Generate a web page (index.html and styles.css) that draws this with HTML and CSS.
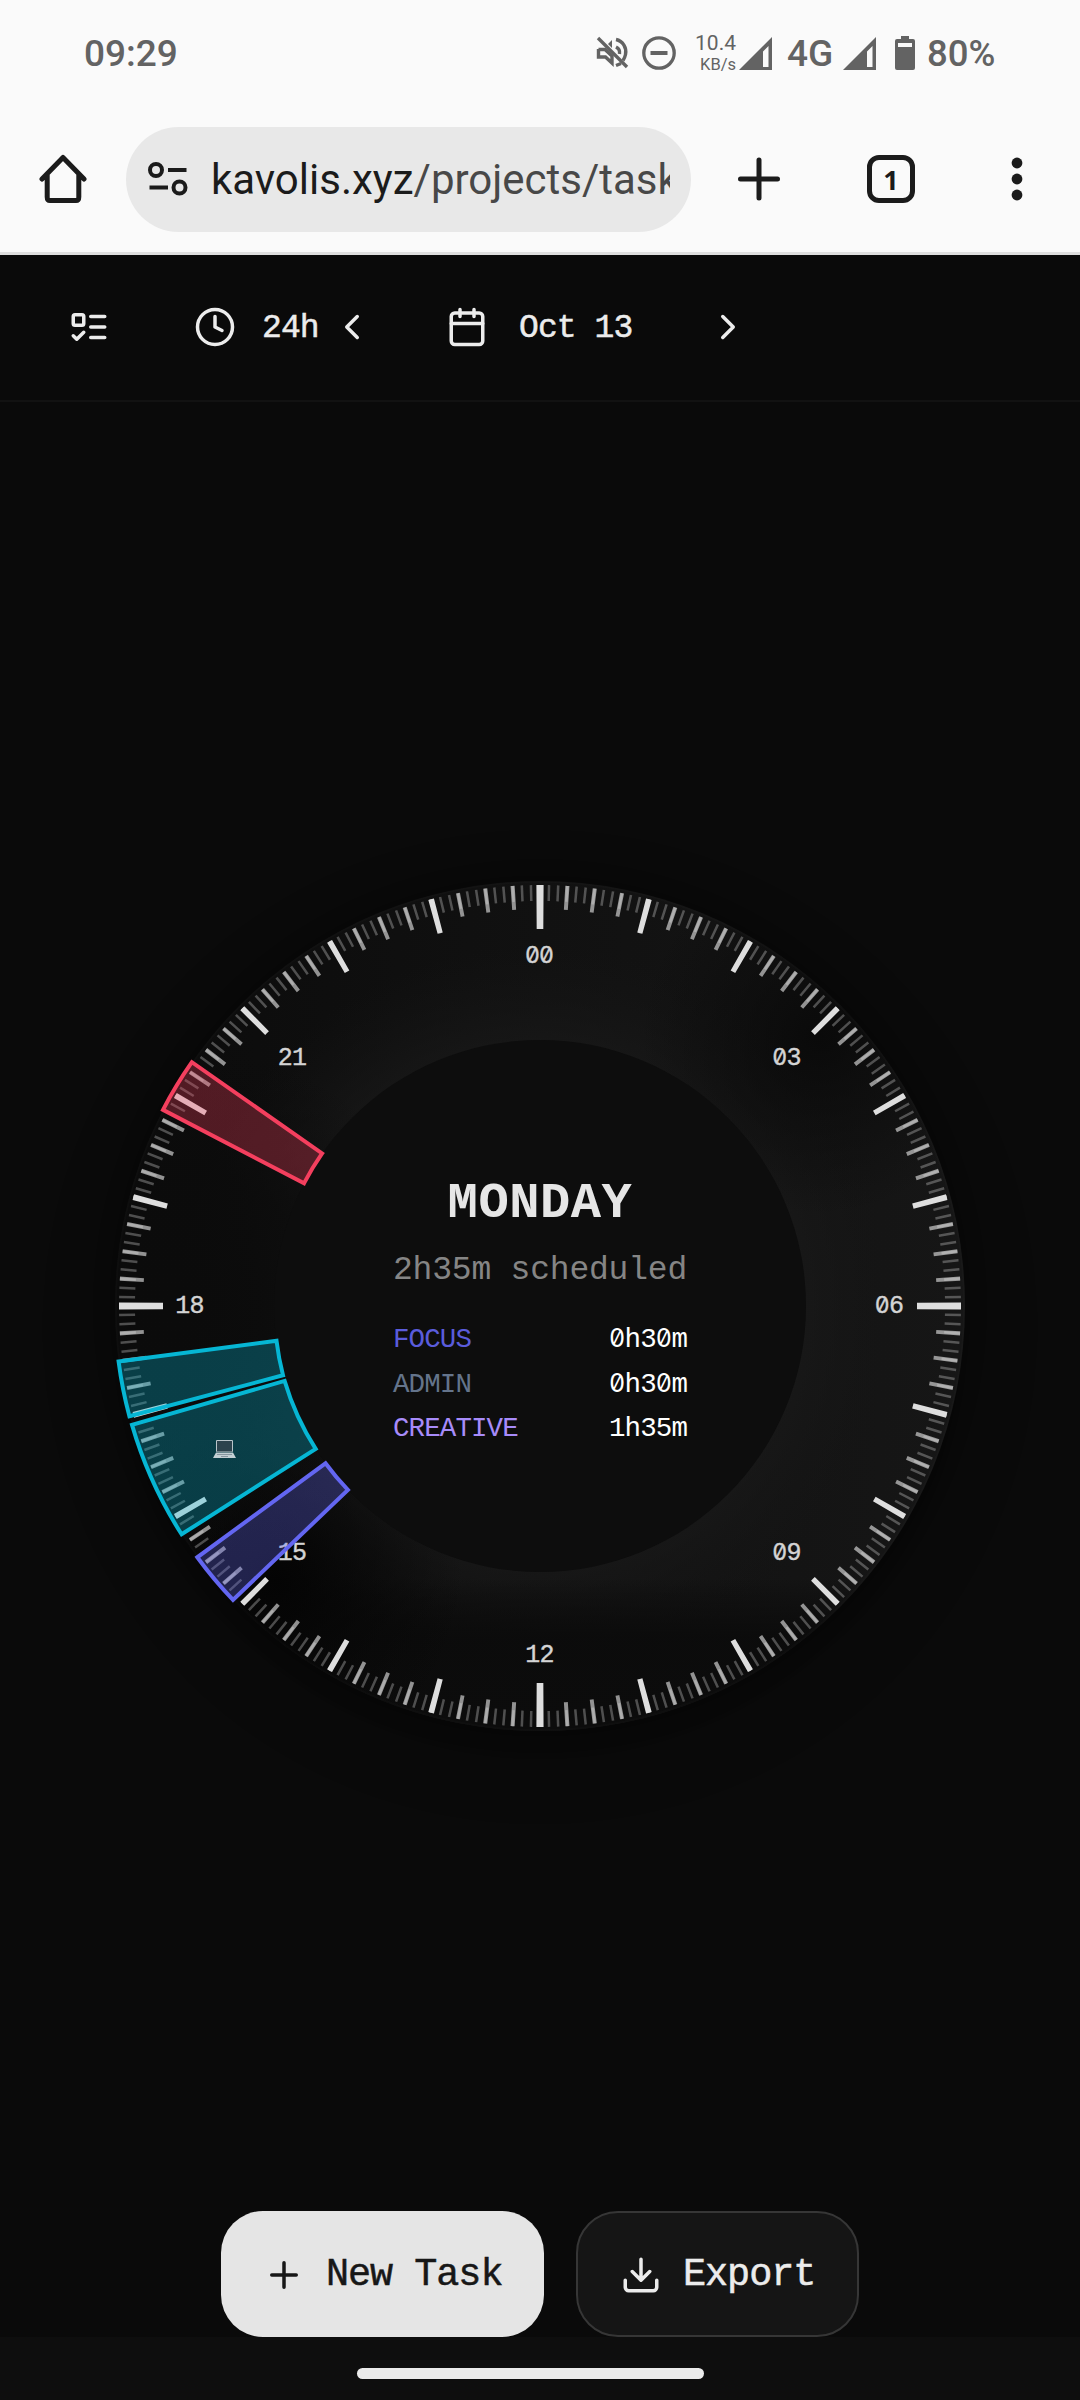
FILE: index.html
```html
<!DOCTYPE html>
<html lang="en">
<head>
<meta charset="utf-8">
<title>Task Clock</title>
<link rel="stylesheet" href="styles.css">
</head>
<body>
<div class="screen">
  <header class="status">
    <span class="time">09:29</span>
    <svg class="mute" width="34" height="34" viewBox="0 0 34 34" fill="none" stroke="#636363" stroke-width="3.4"><path d="M2 2 31 31"/><path d="M2.5 13.500H9L16 20M2.500 13V21H9.500L16 27V19"/><path d="M12 8 16 4V12Z" fill="#636363" stroke="none"/><path d="M20 3.500C27 5 31 12 29.500 18.500 29 21 28 23 27 24.500M20 11C23 12.500 24 15 23.500 18"/><path d="M20 29.500 25 27.500"/></svg>
    <svg class="dnd" width="34" height="34" viewBox="0 0 34 34" fill="none" stroke="#636363"><circle cx="17" cy="17" r="15.200" stroke-width="3.300"/><path d="M8.500 17H25.500" stroke-width="4"/></svg>
    <span class="speed"><b>10.4</b><small>KB/s</small></span>
    <svg class="sig1" width="33" height="33" viewBox="0 0 33 33"><path fill="#636363" fill-rule="evenodd" d="M33 0V33H0ZM29.500 9 24 14.500V30H29.500Z"/></svg>
    <span class="net">4G</span>
    <svg class="sig2" width="33" height="33" viewBox="0 0 33 33"><path fill="#636363" fill-rule="evenodd" d="M33 0V33H0ZM29.500 9 24 14.500V30H29.500Z"/></svg>
    <svg class="battery" width="20" height="34" viewBox="0 0 20 34"><path fill="#636363" fill-rule="evenodd" d="M6 0H14V3H18Q20 3 20 5V32Q20 34 18 34H2Q0 34 0 32V5Q0 3 2 3H6ZM3 7V11H17V7Z"/></svg>
    <span class="pct">80%</span>
  </header>
  <nav class="browser">
    <svg class="home" width="48" height="50" viewBox="0 0 48 50" fill="none" stroke="#1b1b1b" stroke-width="5" stroke-linejoin="round" stroke-linecap="round"><path d="M3 25 24 3.500 45 25M8.200 20V43Q8.200 46.500 11 46.500H37Q39.800 46.500 39.800 43V20"/></svg>
    <div class="pill">
      <svg width="40" height="34" viewBox="0 0 40 34" fill="none" stroke="#1b1b1b" stroke-width="4"><circle cx="8" cy="8" r="6"/><circle cx="31.500" cy="25.500" r="6"/><path d="M20 8H38.500M1.500 25.500H20"/></svg>
      <div class="url">kavolis.xyz<span>/projects/task</span></div>
    </div>
    <svg class="add" width="42" height="44" viewBox="0 0 42 44" stroke="#1b1b1b" stroke-width="5" stroke-linecap="round"><path d="M21 3V41M2.500 22H39.500"/></svg>
    <div class="tabs">1</div>
    <svg class="more" width="12" height="44" viewBox="0 0 12 44" fill="#1b1b1b"><circle cx="6" cy="6" r="5.400"/><circle cx="6" cy="22" r="5.400"/><circle cx="6" cy="38" r="5.400"/></svg>
  </nav>
  <div class="toolbar">
    <svg class="icon list" viewBox="0 0 24 24"><rect x="3" y="5" width="6" height="6" rx="1"/><path d="m3 17 2 2 4-4M13 6h8M13 12h8M13 18h8"/></svg>
    <svg class="icon clock" viewBox="0 0 24 24"><circle cx="12" cy="12" r="10"/><path d="M12 6v6l4 2"/></svg>
    <span class="mode">24h</span>
    <svg class="icon prev" viewBox="0 0 24 24"><path d="m15 18-6-6 6-6"/></svg>
    <svg class="icon cal" viewBox="0 0 24 24"><path d="M8 2v4M16 2v4M3 10h18"/><rect x="3" y="4" width="18" height="18" rx="2"/></svg>
    <span class="date">Oct 13</span>
    <svg class="icon next" viewBox="0 0 24 24"><path d="m9 18 6-6-6-6"/></svg>
  </div>
  <main>
    <div class="dial">
      <svg class="face" viewBox="-425 -425 850 850">
        <defs>
          <linearGradient id="side" x1="0" x2="1" y1="0" y2="0"><stop offset="0" stop-color="#0b0b0b"/><stop offset=".5" stop-color="#111"/><stop offset="1" stop-color="#161616"/></linearGradient>
          <linearGradient id="foot" x1="0" x2="0" y1="0" y2="1"><stop offset=".82" stop-color="#090909" stop-opacity="0"/><stop offset=".89" stop-color="#0b0b0b" stop-opacity=".95"/><stop offset="1" stop-color="#0c0c0c"/></linearGradient>
          <radialGradient id="glow" gradientUnits="userSpaceOnUse" cx="0" cy="0" r="425"><stop offset=".62" stop-color="#191919" stop-opacity=".7"/><stop offset=".85" stop-color="#151515" stop-opacity="0"/></radialGradient>
          <radialGradient id="shadeA" gradientUnits="userSpaceOnUse" cx="280" cy="-270" r="180"><stop offset="0" stop-color="#080808" stop-opacity=".85"/><stop offset="1" stop-color="#0a0a0a" stop-opacity="0"/></radialGradient>
          <radialGradient id="shadeB" gradientUnits="userSpaceOnUse" cx="-265" cy="275" r="190"><stop offset="0" stop-color="#030303" stop-opacity=".9"/><stop offset="1" stop-color="#060606" stop-opacity="0"/></radialGradient>
          <radialGradient id="shadeC" gradientUnits="userSpaceOnUse" cx="-350" cy="0" r="260"><stop offset="0" stop-color="#0b0b0b"/><stop offset=".5" stop-color="#0b0b0b" stop-opacity=".8"/><stop offset="1" stop-color="#0b0b0b" stop-opacity="0"/></radialGradient>
        </defs>
        <circle r="425" fill="url(#side)"/>
        <circle r="425" fill="url(#glow)"/>
        <circle r="425" fill="url(#foot)"/>
        <circle r="425" fill="url(#shadeA)"/>
        <circle r="425" fill="url(#shadeB)"/>
        <circle r="425" fill="url(#shadeC)"/>
        <circle r="424" fill="none" stroke="#fff" stroke-opacity=".015" stroke-width="2"/>
        <circle r="266" fill="#0d0d0d"/>
        <g class="ticks">
          <circle class="t5" r="413" pathLength="288"/>
          <circle class="t15" r="409" pathLength="96"/>
          <circle class="t60" r="403.500" pathLength="24"/>
          <circle class="t360" r="399" pathLength="4"/>
        </g>
        <g class="hours">
          <text x="-1" y="-343.500"><tspan class="z">00</tspan></text>
          <text x="246.500" y="-241.500"><tspan class="z">0</tspan>3</text>
          <text x="349" y="6.500"><tspan class="z">0</tspan>6</text>
          <text x="246.500" y="253.500"><tspan class="z">0</tspan>9</text>
          <text x="-.5" y="355.500">12</text>
          <text x="-248" y="253.500">15</text>
          <text x="-350.500" y="6.500">18</text>
          <text x="-248" y="-241.500">21</text>
        </g>
        <g class="slots">
          <path class="rose" d="M-348.100-243.800A425 425 0 0 0-377-196.200L-235.900-122.800A266 266 0 0 1-217.900-152.600Z"/>
          <path class="cyan" d="M-421.400 55.500A425 425 0 0 0-410.600 110.300L-257 69.300A266 266 0 0 1-263.500 34.800Z"/>
          <path class="cyan" d="M-408 118.900A425 425 0 0 0-358.400 228.300L-224.300 142.900A266 266 0 0 1-255.400 74.900Z"/>
          <path class="indigo" d="M-342.700 251.300A425 425 0 0 0-307 293.900L-192.100 183.900A266 266 0 0 1-214.500 157.300Z"/>
        </g>
        <g transform="translate(-327 134)">
          <rect x="3" y="0" width="17" height="12" rx="1" fill="#b8c4c9"/>
          <rect x="4" y="1" width="15" height="10.500" fill="#2c434d"/>
          <path d="M3 12.500H20L23 18H0Z" fill="#c3d0d4"/>
          <path d="M4 14.500H19M8 16.500H15" stroke="#8797a0" stroke-width="1"/>
        </g>
      </svg>
      <div class="summary">
        <h1>MONDAY</h1>
        <p>2h35m scheduled</p>
        <div class="row"><span class="focus">FOCUS</span><span><i>0</i>h3<i>0</i>m</span></div>
        <div class="row"><span class="admin">ADMIN</span><span><i>0</i>h3<i>0</i>m</span></div>
        <div class="row"><span class="creative">CREATIVE</span><span>1h35m</span></div>
      </div>
    </div>
    <div class="actions">
      <button class="primary"><svg class="icon" viewBox="0 0 24 24"><path d="M5 12h14M12 5v14"/></svg>New Task</button>
      <button class="ghost"><svg class="icon" viewBox="0 0 24 24"><path d="M21 15v4a2 2 0 0 1-2 2H5a2 2 0 0 1-2-2v-4M7 10l5 5 5-5M12 15V3"/></svg>Export</button>
    </div>
  </main>
  <footer class="gesture"><div></div></footer>
</div>
</body>
</html>
```
FILE: styles.css
```css
* { box-sizing: border-box; }
body { margin: 0; background: #0a0a0a; }
svg { display: block; flex: none; }
.screen { width: 1080px; height: 2400px; display: flex; flex-direction: column; overflow: hidden; font-family: "Liberation Mono", monospace; }

.status { height: 106px; background: #fafafa; color: #636363; display: flex; align-items: center; font: 500 37px/1 Roboto, sans-serif; padding-left: 84px; white-space: nowrap; }
.time { width: 512px; }
.mute { margin-right: 12px; }
.dnd { margin-right: 19px; }
.speed { width: 41px; display: flex; flex-direction: column; align-items: flex-end; margin-right: 3px; font-weight: 400; }
.speed b { font-size: 21px; line-height: 24px; font-weight: 400; }
.speed small { font-size: 16.5px; line-height: 20px; }
.net { width: 56px; margin-left: 15px; font-size: 37px; padding-top: 1px; }
.battery { margin: 0 12px 0 19px; }
.pct { font-size: 36.5px; padding-top: 2px; }

.browser { height: 149px; background: #fafafa; border-bottom: 3px solid #dedede; display: flex; align-items: center; padding-left: 39px; }
.home { margin: 0 39px 0 0; }
.pill { width: 565px; height: 105px; border-radius: 53px; background: #e8e8e8; display: flex; align-items: center; padding-left: 22px; }
.url { margin-left: 23px; width: 459px; overflow: hidden; white-space: nowrap; font: 400 42px/60px Roboto, sans-serif; color: #1b1b1b; padding-top: 1px; }
.url span { color: #484848; }
.add { margin-left: 47px; }
.tabs { margin-left: 87px; width: 48px; height: 48px; border: 5px solid #1b1b1b; border-radius: 12px; display: flex; align-items: center; justify-content: center; font: 700 27px/1 "Noto Sans", sans-serif; color: #1b1b1b; }
.more { margin-left: 96px; }

.icon { width: 42px; height: 42px; fill: none; stroke: currentColor; stroke-width: 2; stroke-linecap: round; stroke-linejoin: round; flex: none; }
.toolbar { height: 147px; border-bottom: 2px solid #121212; display: flex; align-items: center; color: #ececec; padding: 0 0 2px 68px; font-size: 33px; letter-spacing: -0.9px; white-space: pre; -webkit-text-stroke: .5px currentColor; }
.clock { margin-left: 84px; }
.mode, .date { padding-top: 4px; }
.mode { width: 69px; margin-left: 26px; }
.cal { margin-left: 73px; }
.date { width: 188px; margin-left: 31px; }

main { height: 1935px; display: flex; flex-direction: column; align-items: center; padding-top: 479px; }
.dial { position: relative; width: 850px; height: 850px; border-radius: 50%; box-shadow: 0 21px 70px rgba(0, 0, 0, .25), 0 0 20px rgba(0, 0, 0, .35); }
.face { width: 850px; height: 850px; overflow: visible; }
.ticks circle { fill: none; stroke: #ececec; transform: rotate(-90deg); }
.ticks .t5 { stroke-width: 16; stroke-opacity: .3; stroke-dasharray: .28 .72; stroke-dashoffset: .14; }
.ticks .t15 { stroke-width: 24; stroke-opacity: .6; stroke-dasharray: .15 .85; stroke-dashoffset: .075; }
.ticks .t60 { stroke: #dedede; stroke-width: 35; stroke-dasharray: .052 .948; stroke-dashoffset: .026; }
.ticks .t360 { stroke: #dedede; stroke-width: 44; stroke-dasharray: .0112 .9888; stroke-dashoffset: .0056; }
.hours { font-size: 25px; letter-spacing: -0.8px; text-anchor: middle; fill: #d4d4d4; stroke: #d4d4d4; stroke-width: .4; }
.z { font-family: Inter, sans-serif; font-size: 23px; font-feature-settings: "zero", "tnum"; }
.slots path { stroke-width: 4; fill-opacity: .3; }
.rose { stroke: #f43f5e; fill: #f43f5e; }
.cyan { stroke: #06b6d4; fill: #06b6d4; }
.indigo { stroke: #6366f1; fill: #6366f1; }
.summary { position: absolute; left: 278px; top: 287px; width: 294px; color: #fff; text-align: center; white-space: nowrap; }
.summary h1 { margin: 0; font-size: 50.5px; line-height: 71px; font-weight: 700; letter-spacing: .5px; color: #e6e6e6; }
.summary p { margin: 0 -4px 15px; font-size: 33px; line-height: 64px; letter-spacing: -0.2px; color: #858585; }
.row { display: flex; justify-content: space-between; font-size: 27.5px; line-height: 44.5px; letter-spacing: -0.9px; }
.row i { display: inline-block; width: 15.6px; font: 400 25px/1 Inter, sans-serif; font-feature-settings: "zero", "tnum"; letter-spacing: 0; }
.focus { color: #5a5cdc; }
.admin { color: #64748b; }
.creative { color: #a78bfa; }

.actions { margin-top: auto; display: flex; gap: 32px; }
.actions button { height: 126px; border-radius: 42px; display: flex; align-items: center; border: 0; font: 400 38.5px/1 "Liberation Mono", monospace; letter-spacing: -1.05px; padding: 2px 0 0 42px; white-space: pre; -webkit-text-stroke: .5px currentColor; }
.actions .icon { margin-right: 21px; }
.actions .primary { width: 323px; background: #e5e5e5; color: #171717; }
.actions .ghost { width: 283px; background: #151515; color: #ececec; border: 2px solid #363636; padding-left: 42px; }

.gesture { height: 63px; background: #0e0e0e; display: flex; justify-content: center; padding: 31px 19px 0 0; }
.gesture div { width: 347px; height: 11px; border-radius: 6px; background: #ebebeb; }
```
